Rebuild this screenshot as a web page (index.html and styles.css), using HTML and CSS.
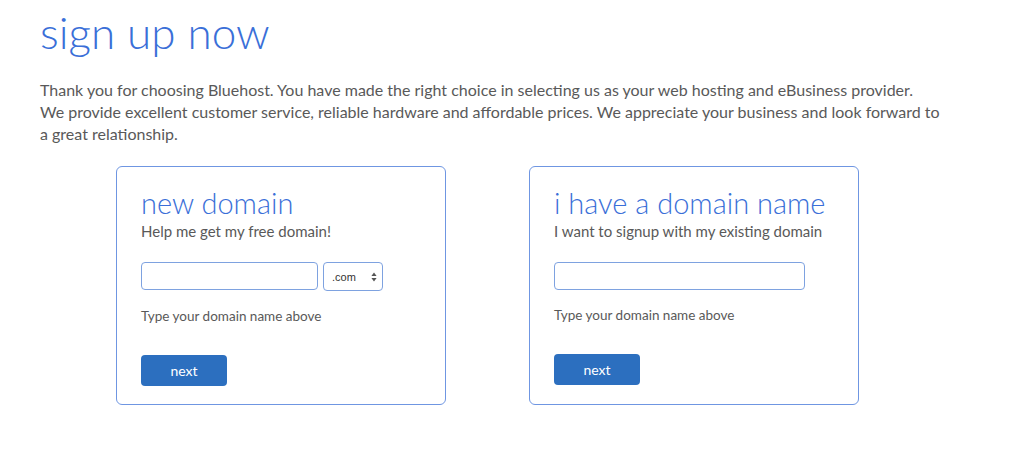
FILE: index.html
```html
<!DOCTYPE html>
<html lang="en">
<head>
    <meta charset="UTF-8">
    <title>sign up now</title>
    <link rel="stylesheet" href="styles.css">
</head>
<body>
    <div class="page">
        <h1>sign up now</h1>
        <p class="intro">Thank you for choosing Bluehost. You have made the right choice in selecting us as your web hosting and eBusiness provider. We provide excellent customer service, reliable hardware and affordable prices. We appreciate your business and look forward to a great relationship.</p>

        <div class="boxes">
            <div class="box">
                <h2>new domain</h2>
                <div class="sub">Help me get my free domain!</div>
                <div class="fields">
                    <input type="text" class="domain short">
                    <div class="tld">
                        <span>.com</span>
                        <svg width="6" height="10" viewBox="0 0 6 10"><path d="M3 0.5 L5.6 4 H0.4 Z M3 9.5 L5.6 6 H0.4 Z" fill="#555"/></svg>
                    </div>
                </div>
                <div class="hint">Type your domain name above</div>
                <button>next</button>
            </div>

            <div class="box">
                <h2>i have a domain name</h2>
                <div class="sub">I want to signup with my existing domain</div>
                <div class="fields">
                    <input type="text" class="domain long">
                </div>
                <div class="hint">Type your domain name above</div>
                <button>next</button>
            </div>
        </div>
    </div>
</body>
</html>
```

FILE: styles.css
```css
body {
    margin: 0;
    padding: 0;
    background-color: #ffffff;
    font-family: Lato, "Open Sans", sans-serif;
    color: #595959;
}
.page {
    padding: 6px 40px 0 40px;
}
h1 {
    margin: 0;
    font-size: 44px;
    font-weight: 300;
    color: #3a6fd8;
    line-height: 52px;
}
.intro {
    margin: 21px 0 0 0;
    width: 900px;
    font-size: 16px;
    line-height: 22px;
    font-weight: 400;
}
.boxes {
    display: flex;
    gap: 83px;
    margin: 21px 0 0 76px;
}
.box {
    width: 330px;
    height: 239px;
    box-sizing: border-box;
    border: 1px solid #6f96e2;
    border-radius: 6px;
    padding: 18px 24px 0 24px;
}
h2 {
    margin: 0;
    font-size: 29px;
    font-weight: 300;
    color: #3a6fd8;
    line-height: 36px;
    white-space: nowrap;
}
.sub {
    font-size: 15px;
    line-height: 20px;
}
.fields {
    display: flex;
    gap: 5px;
    margin-top: 21px;
}
.domain {
    height: 28px;
    box-sizing: border-box;
    border: 1px solid #7ea2e0;
    border-radius: 4px;
    outline: none;
}
.short {
    width: 177px;
}
.long {
    width: 251px;
}
.tld {
    width: 60px;
    height: 29px;
    box-sizing: border-box;
    border: 1px solid #7ea2e0;
    border-radius: 4px;
    display: flex;
    align-items: center;
    justify-content: space-between;
    padding: 0 5px 0 8px;
    font-family: "Liberation Sans", Arial, sans-serif;
    font-size: 11px;
    color: #333;
}
.hint {
    margin-top: 15px;
    font-size: 13.5px;
    line-height: 20px;
}
button {
    margin-top: 29px;
    width: 86px;
    height: 31px;
    border: none;
    border-radius: 4px;
    background-color: #2c6fbf;
    color: #ffffff;
    font-family: Lato, sans-serif;
    font-size: 14px;
    cursor: pointer;
}
```
